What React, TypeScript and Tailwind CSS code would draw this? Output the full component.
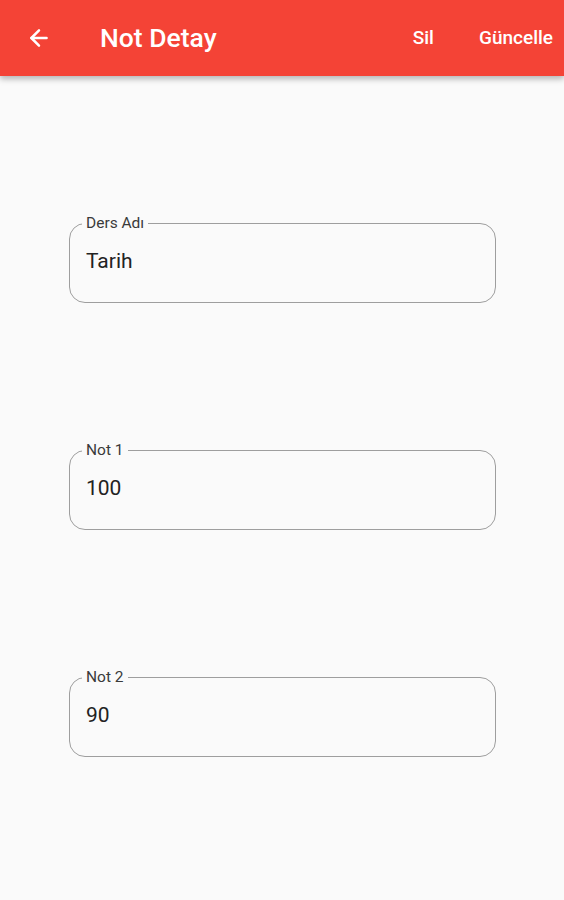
import { ArrowLeft } from 'lucide-react';

const fields = [
  { label: 'Ders Adı', value: 'Tarih' },
  { label: 'Not 1', value: '100' },
  { label: 'Not 2', value: '90' },
];

export default function App() {
  return (
    <div className="min-h-[900px] w-[564px] bg-[#fafafa] font-['Roboto',sans-serif]">
      {/* App bar */}
      <header className="relative z-10 flex h-[76px] items-center bg-[#f44336] pl-[26px] pr-[11px] text-white shadow-[0_3px_6px_rgba(0,0,0,0.28)]">
        <ArrowLeft className="h-[26px] w-[26px]" strokeWidth={2.3} />
        <h1 className="ml-[48px] text-[26.5px] font-medium">Not Detay</h1>
        <div className="ml-auto flex items-center gap-[45px] text-[19px] font-medium">
          <span>Sil</span>
          <span>Güncelle</span>
        </div>
      </header>

      {/* Form */}
      <main className="flex flex-col gap-[147px] pl-[69px] pt-[147px]">
        {fields.map((f) => (
          <div
            key={f.label}
            className="relative flex h-[80px] w-[427px] items-center rounded-[16px] border-[1.3px] border-[#9e9e9e] pb-[3px] pl-[16px]"
          >
            <span className="absolute -top-[11px] left-[12px] bg-[#fafafa] px-[4px] text-[15.5px] leading-[20px] text-[#3a3a3a]">
              {f.label}
            </span>
            <span className="text-[21px] text-[#222]">{f.value}</span>
          </div>
        ))}
      </main>
    </div>
  );
}
